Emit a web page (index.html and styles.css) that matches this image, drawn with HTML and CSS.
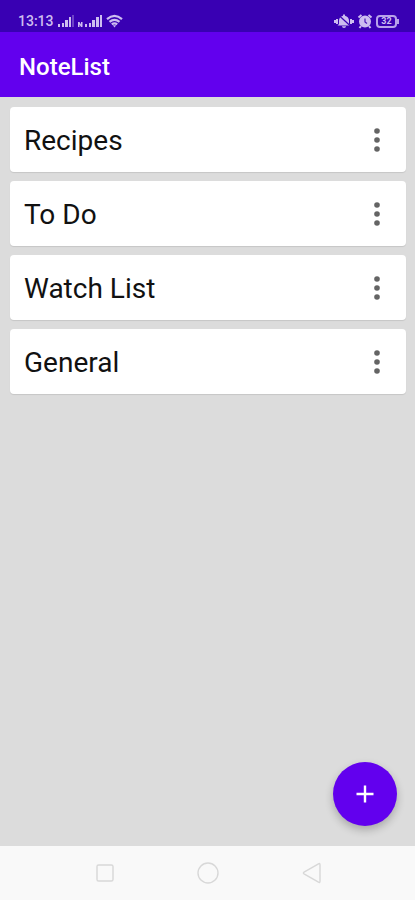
FILE: index.html
```html
<!DOCTYPE html>
<html lang="en">

<head>
    <meta charset="UTF-8" />
    <meta name="viewport" content="width=device-width, initial-scale=1.0" />
    <link rel="stylesheet" href="styles.css">
    <title>NoteList</title>
</head>

<body>
    <div class="status-bar">
        <span class="time">13:13</span>
        <svg class="signals" width="66" height="14" viewBox="0 0 66 14" fill="currentColor">
            <path d="M1 10h2v3H1zM5 9h2v4H5zM8 6h3v7H8zM12 3h2v10h-2z" />
            <path d="M15 1h2v12h-2z" opacity="0.35" />
            <path d="M21 8h1.500l1.500 2.500V8h1.500v5H24l-1.500-2.500V13H21zM28 10h2v3h-2zM32 9h2v4h-2zM35 6h3v7h-3zM39 3h3v10h-3zM43 1h2v12h-2z" />
            <g fill="none" stroke="currentColor" stroke-width="2.200">
                <path d="M50 5.200q7.500 -6.500 15 0" />
                <path d="M52.500 7.900q5 -4.200 10 0" />
                <path d="M54.800 10.400q2.700 -2.200 5.400 0" />
            </g>
            <path d="M55.800 11.200h3.400l-1.700 2.300z" />
        </svg>
        <svg class="icon-right" width="20" height="16" viewBox="0 0 20 16" fill="currentColor">
            <path d="M9 1.500h2v1.300c2.500 .6 4 2.300 4 5V11l1.500 1.500h-13L5 11V7.800c0-2.700 1.500-4.400 4-5zM8 13.300h4c0 2.200-4 2.200-4 0z" />
            <path d="M1 7v3M3 6v5M17 6v5M19 7v3" stroke="currentColor" stroke-width="2" />
            <path d="M4 1.500l13 12" stroke="#3900b3" stroke-width="1.200" />
        </svg>
        <svg width="16" height="16" viewBox="0 0 16 16">
            <circle cx="8" cy="8.500" r="5" fill="currentColor" stroke="currentColor" stroke-width="2" />
            <path d="M1.500 4.500l3-2.500M14.500 4.500l-3-2.500M4 13l-1.500 2M12 13l1.500 2" stroke="currentColor" stroke-width="2" />
            <path d="M8 5.500v3.500l2 1.500" fill="none" stroke="#4a14ba" stroke-width="1.200" />
        </svg>
        <span class="battery">32</span>
    </div>
    <header class="header">
        <h1>NoteList</h1>
    </header>
    <main class="main">
        <ul class="notes">
            <li class="note">
                <span>Recipes</span>
                <button type="button" class="more" aria-label="Recipes options">
                    <svg width="6" height="24" viewBox="0 0 6 24" fill="currentColor"><circle cx="3" cy="3" r="2.800" /><circle cx="3" cy="12" r="2.800" /><circle cx="3" cy="21" r="2.800" /></svg>
                </button>
            </li>
            <li class="note">
                <span>To Do</span>
                <button type="button" class="more" aria-label="To Do options">
                    <svg width="6" height="24" viewBox="0 0 6 24" fill="currentColor"><circle cx="3" cy="3" r="2.800" /><circle cx="3" cy="12" r="2.800" /><circle cx="3" cy="21" r="2.800" /></svg>
                </button>
            </li>
            <li class="note">
                <span>Watch List</span>
                <button type="button" class="more" aria-label="Watch List options">
                    <svg width="6" height="24" viewBox="0 0 6 24" fill="currentColor"><circle cx="3" cy="3" r="2.800" /><circle cx="3" cy="12" r="2.800" /><circle cx="3" cy="21" r="2.800" /></svg>
                </button>
            </li>
            <li class="note">
                <span>General</span>
                <button type="button" class="more" aria-label="General options">
                    <svg width="6" height="24" viewBox="0 0 6 24" fill="currentColor"><circle cx="3" cy="3" r="2.800" /><circle cx="3" cy="12" r="2.800" /><circle cx="3" cy="21" r="2.800" /></svg>
                </button>
            </li>
        </ul>
        <button type="button" class="add" aria-label="Add list">
            <svg width="18" height="18" viewBox="0 0 18 18" stroke="currentColor" stroke-width="2.400"><path d="M9 .5v17M.5 9h17" /></svg>
        </button>
    </main>
    <nav class="nav-bar">
        <button type="button" aria-label="Recent apps">
            <svg width="24" height="24" viewBox="0 0 24 24"><rect x="4" y="4" width="16" height="16" rx="1.500" /></svg>
        </button>
        <button type="button" aria-label="Home">
            <svg width="24" height="24" viewBox="0 0 24 24"><circle cx="12" cy="12" r="10" /></svg>
        </button>
        <button type="button" aria-label="Back">
            <svg width="24" height="24" viewBox="0 0 24 24"><path d="M4 11.200L18.500 2.800Q20 2 20 3.800V20.200Q20 22 18.500 21.200L4 12.800Q2.800 12 4 11.200z" /></svg>
        </button>
    </nav>
</body>

</html>
```
FILE: styles.css
```css
* {
    margin: 0;
    padding: 0;
    box-sizing: border-box;
    font-family: Roboto, sans-serif;
}

body {
    min-height: 100vh;
    display: flex;
    flex-direction: column;
    background-color: #dcdcdc;
}

button {
    border: none;
    background: none;
    cursor: pointer;
}

svg {
    display: block;
}

.status-bar {
    height: 32px;
    padding: 10px 18px 0 18px;
    display: flex;
    align-items: center;
    gap: 3px;
    background-color: #3900b3;
    color: #cdbdf0;
}

.time {
    font-size: 14px;
    font-weight: 500;
    line-height: 20px;
}

.icon-right {
    margin-left: auto;
}

.battery {
    position: relative;
    width: 21px;
    height: 13px;
    border: 2px solid #b8a2ea;
    border-radius: 4px;
    font-size: 9px;
    font-weight: 700;
    line-height: 9px;
    text-align: center;
}

.battery::after {
    content: "";
    position: absolute;
    top: 2px;
    right: -4px;
    width: 2px;
    height: 5px;
    background-color: #b8a2ea;
}

.header {
    height: 65px;
    padding: 4px 19px 0;
    display: flex;
    align-items: center;
    background-color: #6200ee;
    color: #ffffff;
}

.header h1 {
    font-size: 24px;
    font-weight: 500;
    line-height: 32px;
}

.main {
    flex: 1;
    display: flex;
    flex-direction: column;
    justify-content: space-between;
    padding: 10px 9px 20px 10px;
}

.notes {
    display: flex;
    flex-direction: column;
    gap: 9px;
    list-style: none;
}

.note {
    height: 65px;
    padding: 0 14px;
    display: flex;
    align-items: center;
    justify-content: space-between;
    border-radius: 4px;
    background-color: #ffffff;
    box-shadow: 0 1px 1px rgba(0, 0, 0, 0.1);
    color: #111111;
    font-size: 28px;
    line-height: 36px;
}

.note span {
    padding-top: 3px;
}

.more {
    padding: 8px 12px;
    color: #646464;
}

.add {
    align-self: flex-end;
    width: 64px;
    height: 64px;
    margin-right: 9px;
    display: flex;
    align-items: center;
    justify-content: center;
    border-radius: 50%;
    background-color: #6200ee;
    box-shadow: 0 4px 8px rgba(0, 0, 0, 0.24);
    color: #ffffff;
}

.nav-bar {
    height: 54px;
    padding: 0 51px 0 53px;
    display: flex;
    align-items: center;
    justify-content: space-around;
    background-color: #f9f9f9;
}

.nav-bar svg {
    fill: none;
    stroke: #d8d8d8;
    stroke-width: 1.4;
}
```
